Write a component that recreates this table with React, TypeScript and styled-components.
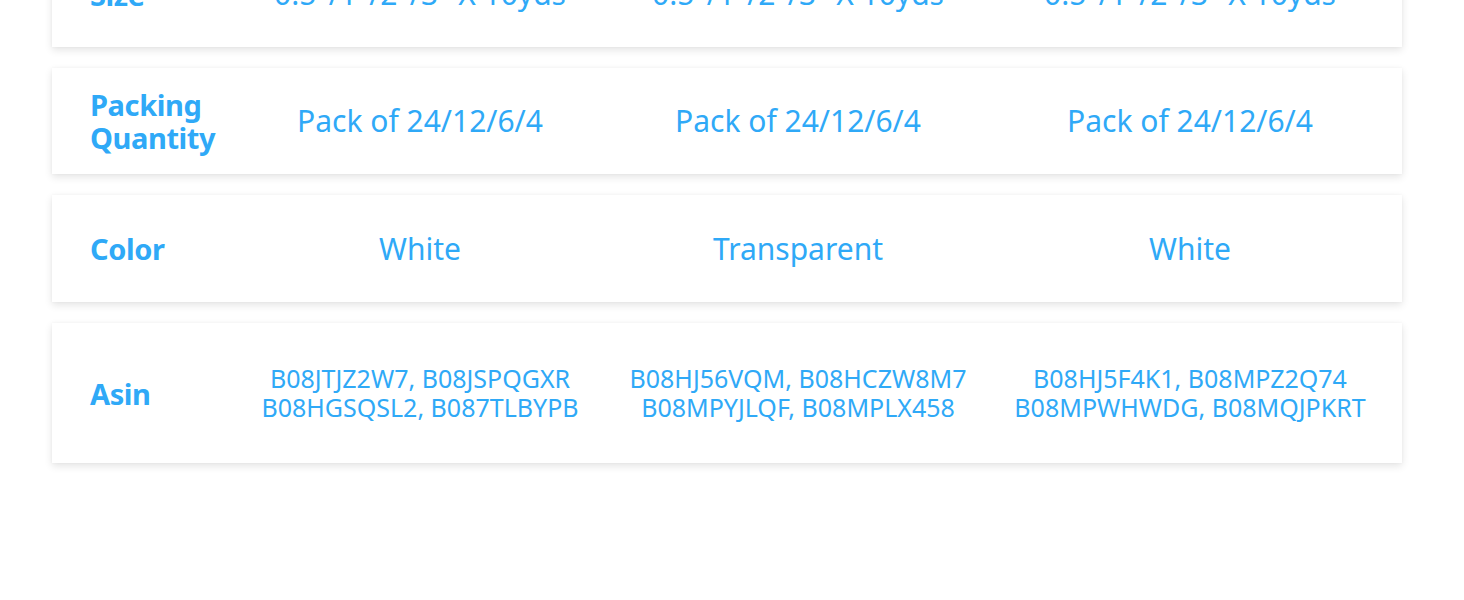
import styled, { createGlobalStyle } from 'styled-components';

const GlobalStyle = createGlobalStyle`
  html, body {
    margin: 0;
    padding: 0;
    background: #fff;
    overflow: hidden;
  }
  body {
    font-family: "Noto Sans", "Open Sans", sans-serif;
  }
`;

const Page = styled.div`
  width: 1464px;
  height: 600px;
  overflow: hidden;
`;

const Table = styled.div`
  display: flex;
  flex-direction: column;
  gap: 21px;
  margin: -59px 62px 0 52px;
`;

const Row = styled.div<{ $height: number }>`
  display: grid;
  grid-template-columns: 180px 376px 380px 1fr;
  align-items: center;
  height: ${(p) => p.$height}px;
  padding-right: 10px;
  background: #fff;
  box-shadow: 0 3px 8px rgba(0, 0, 0, 0.11), 0 0 3px rgba(0, 0, 0, 0.04);
  color: #2fa9f7;
`;

const Label = styled.div`
  padding-left: 38px;
  font-size: 29px;
  font-weight: 700;
  line-height: 33px;
  letter-spacing: -0.4px;
`;

const Value = styled.div<{ $small?: boolean }>`
  text-align: center;
  font-size: ${(p) => (p.$small ? 25 : 30)}px;
  line-height: ${(p) => (p.$small ? 29.5 : 36)}px;
  white-space: pre-line;
`;

type RowData = {
  label: string;
  values: string[];
  height: number;
  small?: boolean;
};

const rows: RowData[] = [
  {
    label: 'Size',
    values: ['0.5"/1"/2"/3" X 10yds', '0.5"/1"/2"/3" X 10yds', '0.5"/1"/2"/3" X 10yds'],
    height: 106,
  },
  {
    label: 'Packing\nQuantity',
    values: ['Pack of 24/12/6/4', 'Pack of 24/12/6/4', 'Pack of 24/12/6/4'],
    height: 106,
  },
  {
    label: 'Color',
    values: ['White', 'Transparent', 'White'],
    height: 107,
  },
  {
    label: 'Asin',
    values: [
      'B08JTJZ2W7, B08JSPQGXR\nB08HGSQSL2, B087TLBYPB',
      'B08HJ56VQM, B08HCZW8M7\nB08MPYJLQF, B08MPLX458',
      'B08HJ5F4K1, B08MPZ2Q74\nB08MPWHWDG, B08MQJPKRT',
    ],
    height: 140,
    small: true,
  },
];

const App = () => {
  return (
    <Page>
      <GlobalStyle />
      <Table>
        {rows.map((row) => (
          <Row key={row.label} $height={row.height}>
            <Label>
              {row.label.split('\n').map((line) => (
                <div key={line}>{line}</div>
              ))}
            </Label>
            {row.values.map((v, i) => (
              <Value key={i} $small={row.small}>
                {v}
              </Value>
            ))}
          </Row>
        ))}
      </Table>
    </Page>
  );
};

export default App;
